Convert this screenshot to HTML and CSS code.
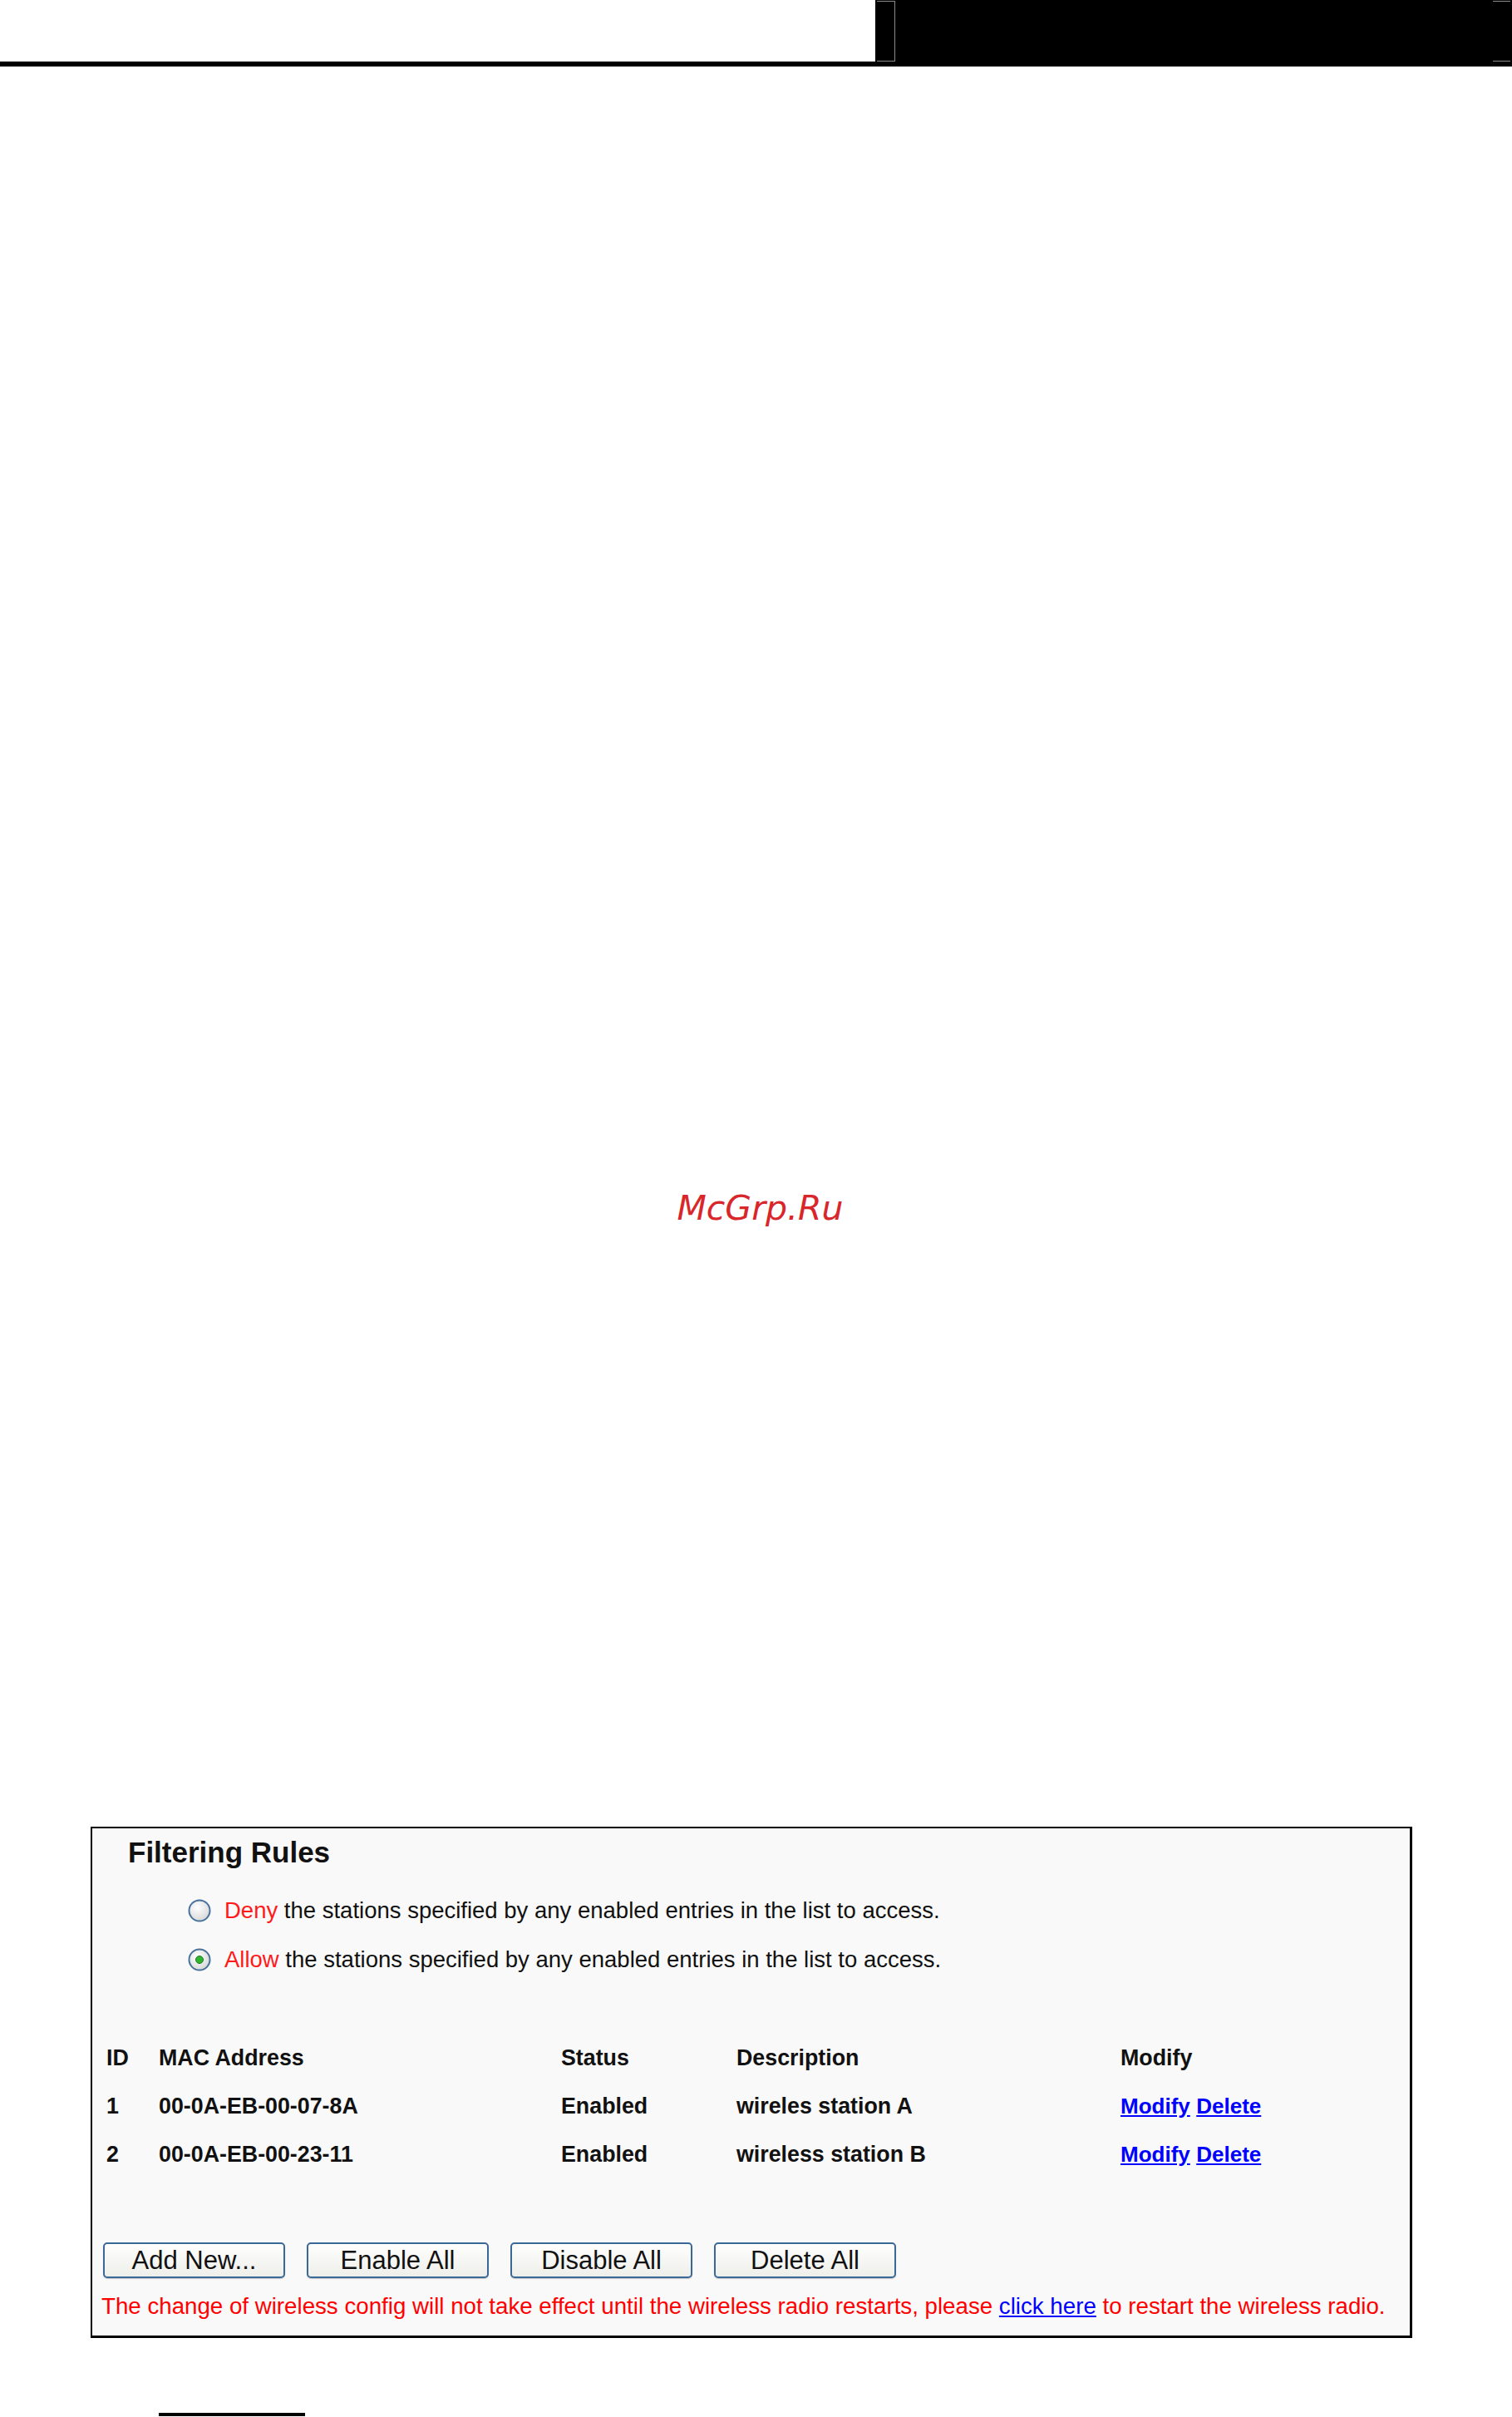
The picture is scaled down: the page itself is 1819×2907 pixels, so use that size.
FILE: index.html
```html
<!DOCTYPE html>
<html lang="en">
<head>
<meta charset="utf-8">
<title>Filtering Rules</title>
<link rel="stylesheet" href="styles.css">
</head>
<body>
<div class="page">
  <header class="topbar">
    <div class="topbar-left"></div>
    <div class="topbar-right">
      <div class="mark-left"></div>
      <div class="mark-right"></div>
    </div>
  </header>

  <div class="watermark">McGrp.Ru</div>

  <section class="panel">
    <h2 class="panel-title">Filtering Rules</h2>

    <div class="radio-row">
      <svg class="radio" viewBox="0 0 28 28" width="28" height="28">
        <defs>
          <radialGradient id="rg1" cx="40%" cy="35%" r="70%">
            <stop offset="0" stop-color="#ffffff"/>
            <stop offset="1" stop-color="#d6d6d6"/>
          </radialGradient>
        </defs>
        <circle cx="14" cy="14" r="12.5" fill="url(#rg1)" stroke="#46729c" stroke-width="2"/>
      </svg>
      <span class="radio-text"><span class="red">Deny</span> the stations specified by any enabled entries in the list to access.</span>
    </div>
    <div class="radio-row">
      <svg class="radio" viewBox="0 0 28 28" width="28" height="28">
        <defs>
          <radialGradient id="rg2" cx="40%" cy="35%" r="70%">
            <stop offset="0" stop-color="#ffffff"/>
            <stop offset="1" stop-color="#d6d6d6"/>
          </radialGradient>
        </defs>
        <circle cx="14" cy="14" r="12.5" fill="url(#rg2)" stroke="#46729c" stroke-width="2"/>
        <circle cx="14" cy="14" r="4.5" fill="#2fb52f" stroke="#1c7a1c" stroke-width="1"/>
      </svg>
      <span class="radio-text"><span class="red">Allow</span> the stations specified by any enabled entries in the list to access.</span>
    </div>

    <div class="rules">
      <div class="rule-row">
        <span>ID</span><span>MAC Address</span><span>Status</span><span>Description</span><span>Modify</span>
      </div>
      <div class="rule-row">
        <span>1</span><span>00-0A-EB-00-07-8A</span><span>Enabled</span><span>wireles station A</span>
        <span><a href="#" class="link">Modify</a> <a href="#" class="link">Delete</a></span>
      </div>
      <div class="rule-row">
        <span>2</span><span>00-0A-EB-00-23-11</span><span>Enabled</span><span>wireless station B</span>
        <span><a href="#" class="link">Modify</a> <a href="#" class="link">Delete</a></span>
      </div>
    </div>

    <div class="buttons">
      <button class="btn">Add New...</button>
      <button class="btn">Enable All</button>
      <button class="btn">Disable All</button>
      <button class="btn">Delete All</button>
    </div>

    <p class="note">The change of wireless config will not take effect until the wireless radio restarts, please <a href="#" class="note-link">click here</a> to restart the wireless radio.</p>
  </section>

  <div class="footer-rule"></div>
</div>
</body>
</html>
```

FILE: styles.css
```css
html, body {
  margin: 0;
  padding: 0;
  background: #ffffff;
}

body {
  font-family: "Liberation Sans", Arial, sans-serif;
  color: #000;
}

.page {
  width: 1819px;
  height: 2907px;
  overflow: hidden;
}

/* top bar */
.topbar {
  display: flex;
  height: 80px;
}

.topbar-left {
  flex: 1;
  height: 74px;
  border-bottom: 6px solid #000;
}

.topbar-right {
  width: 766px;
  height: 80px;
  background: #000;
  display: flex;
  justify-content: space-between;
  align-items: flex-start;
  padding-top: 1px;
  box-sizing: border-box;
}

.mark-left {
  margin-left: 2px;
  width: 21px;
  height: 71px;
  border-top: 1px solid #8a8a8a;
  border-bottom: 1px solid #8a8a8a;
  border-right: 1px solid #8a8a8a;
}

.mark-right {
  margin-right: 2px;
  width: 21px;
  height: 71px;
  border-top: 1px solid #8a8a8a;
  border-bottom: 1px solid #8a8a8a;
}

/* watermark */
.watermark {
  margin-top: 1349px;
  height: 48px;
  line-height: 48px;
  text-align: center;
  padding-left: 10px;
  font-family: "DejaVu Sans", sans-serif;
  font-style: oblique;
  font-size: 41px;
  color: #d9262a;
}

/* panel */
.panel {
  margin: 720px 0 0 109px;
  width: 1590px;
  box-sizing: border-box;
  border: 2px solid #000;
  border-right-width: 3px;
  border-bottom-width: 3px;
  background: #f9f9f9;
  padding: 0 0 15px 0;
}

.panel-title {
  margin: 0;
  padding: 9px 0 0 43px;
  font-size: 35px;
  line-height: 40px;
  font-weight: bold;
  color: #111;
}

.radio-row {
  display: flex;
  align-items: center;
  height: 59px;
  padding-left: 115px;
}

.panel-title + .radio-row {
  margin-top: 20px;
}

.radio {
  flex: none;
  display: block;
}

.radio-text {
  margin-left: 16px;
  font-size: 27.5px;
  line-height: 32px;
  color: #111;
}

.red {
  color: #ff1a1a;
}

/* rules table */
.rules {
  margin-top: 60px;
}

.rule-row {
  display: grid;
  grid-template-columns: 63px 484px 211px 462px 1fr;
  align-items: center;
  height: 58px;
  padding-left: 17px;
  font-size: 26.8px;
  font-weight: bold;
  color: #111;
}

.link {
  font-size: 26px;
  color: #0000ff;
  text-decoration: underline;
}

/* buttons */
.buttons {
  display: flex;
  gap: 26px;
  margin-top: 77px;
  padding-left: 13px;
}

.btn {
  width: 219px;
  height: 43px;
  box-sizing: border-box;
  border: 2px solid #3a6897;
  border-radius: 5px;
  background: linear-gradient(#fefefe, #eeeeea);
  font-family: "Liberation Sans", Arial, sans-serif;
  font-size: 31px;
  line-height: 38px;
  color: #111;
  padding: 0;
  box-shadow: 0 1px 1px #c8c8c8;
}

.note {
  margin: 14px 0 0 0;
  padding-left: 11px;
  font-size: 27.7px;
  line-height: 40px;
  color: #ff0000;
}

.note-link {
  color: #0000ff;
  text-decoration: underline;
}

.footer-rule {
  margin: 90px 0 0 191px;
  width: 176px;
  height: 4px;
  background: #000;
}
```
